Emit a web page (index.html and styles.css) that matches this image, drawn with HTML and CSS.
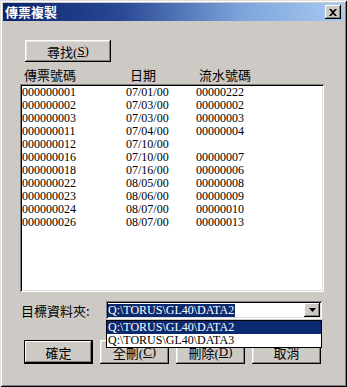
FILE: index.html
```html
<!DOCTYPE html>
<html lang="zh-Hant">
<head>
<meta charset="utf-8">
<title>傳票複製</title>
<link rel="stylesheet" href="styles.css">
</head>
<body>
<div class="window">
  <div class="titlebar">
    <span class="title">傳票複製</span>
    <span class="close">
      <svg width="8" height="7" viewBox="0 0 8 7"><path d="M0 0h2l2 2 2-2h2L5 3.5 8 7H6L4 5 2 7H0l3-3.5z" fill="#000"/></svg>
    </span>
  </div>
  <div class="content">
    <button class="btn search">尋找(<u>S</u>)</button>
    <div class="headers">
      <span class="c1">傳票號碼</span><span class="c2">日期</span><span class="c3">流水號碼</span>
    </div>
    <div class="list">
      <div class="row"><span class="c1">000000001</span><span class="c2">07/01/00</span><span class="c3">00000222</span></div>
      <div class="row"><span class="c1">000000002</span><span class="c2">07/03/00</span><span class="c3">00000002</span></div>
      <div class="row"><span class="c1">000000003</span><span class="c2">07/03/00</span><span class="c3">00000003</span></div>
      <div class="row"><span class="c1">000000011</span><span class="c2">07/04/00</span><span class="c3">00000004</span></div>
      <div class="row"><span class="c1">000000012</span><span class="c2">07/10/00</span><span class="c3"></span></div>
      <div class="row"><span class="c1">000000016</span><span class="c2">07/10/00</span><span class="c3">00000007</span></div>
      <div class="row"><span class="c1">000000018</span><span class="c2">07/16/00</span><span class="c3">00000006</span></div>
      <div class="row"><span class="c1">000000022</span><span class="c2">08/05/00</span><span class="c3">00000008</span></div>
      <div class="row"><span class="c1">000000023</span><span class="c2">08/06/00</span><span class="c3">00000009</span></div>
      <div class="row"><span class="c1">000000024</span><span class="c2">08/07/00</span><span class="c3">00000010</span></div>
      <div class="row"><span class="c1">000000026</span><span class="c2">08/07/00</span><span class="c3">00000013</span></div>
    </div>
    <div class="target">
      <span class="label">目標資料夾:</span>
      <div class="combo">
        <div class="combo-field"><span class="sel">Q:\TORUS\GL40\DATA2</span></div>
        <span class="drop-btn">
          <svg width="7" height="4" viewBox="0 0 7 4"><path d="M0 0h7L3.5 4z" fill="#000"/></svg>
        </span>
        <div class="dropdown">
          <div class="opt active">Q:\TORUS\GL40\DATA2</div>
          <div class="opt">Q:\TORUS\GL40\DATA3</div>
        </div>
      </div>
    </div>
    <div class="actions">
      <button class="btn default">確定</button>
      <button class="btn">全刪(<u>C</u>)</button>
      <button class="btn">刪除(<u>D</u>)</button>
      <button class="btn">取消</button>
    </div>
  </div>
</div>
</body>
</html>
```

FILE: styles.css
```css
html, body {
  margin: 0;
  padding: 0;
  background: #cdc9c5;
}
body {
  font-family: "Liberation Serif", "Noto Sans CJK TC", serif;
  font-size: 12px;
  color: #000;
}
.window {
  width: 347px;
  height: 387px;
  box-sizing: border-box;
  padding: 3px;
  background: #cdc9c5;
  box-shadow: inset 1px 1px #dfdfdf, inset -1px -1px #000, inset 2px 2px #fff, inset -2px -2px #808080;
}
.titlebar {
  height: 18px;
  display: flex;
  align-items: center;
  justify-content: space-between;
  padding: 0 3px 0 2px;
  background: linear-gradient(90deg, #0a246a 0%, #2a4a96 35%, #7ea4dc 70%, #a6caf0 100%);
}
.title {
  color: #fff;
  font-family: "Noto Sans CJK TC", sans-serif;
  font-weight: bold;
  font-size: 13px;
  line-height: 18px;
}
.close {
  width: 16px;
  height: 14px;
  box-sizing: border-box;
  display: flex;
  align-items: center;
  justify-content: center;
  background: #cdc9c5;
  box-shadow: inset -1px -1px #000, inset 1px 1px #fff, inset -2px -2px #808080;
}
.content {
  padding: 19px 20px 0 17px;
}
.btn {
  font-family: "Liberation Serif", "Noto Sans CJK TC", serif;
  font-size: 13px;
  color: #000;
  background: #cdc9c5;
  border: 0;
  padding: 0;
  margin: 0;
  height: 24px;
  box-sizing: border-box;
  box-shadow: inset -1px -1px #000, inset 1px 1px #fff, inset -2px -2px #808080, inset 2px 2px #e6e2de;
  display: flex;
  align-items: center;
  justify-content: center;
}
.btn u {
  text-decoration: underline;
  text-underline-offset: 1px;
}
.search {
  width: 86px;
  height: 22px;
  margin-left: 5px;
}
.headers {
  display: flex;
  margin-top: 5px;
  height: 15px;
  margin-bottom: 2px;
  font-family: "Noto Sans CJK TC", sans-serif;
  font-size: 13px;
  line-height: 15px;
  padding-left: 4px;
}
.headers .c1 { width: 106px; }
.headers .c2 { width: 69px; }
.list {
  height: 208px;
  box-sizing: border-box;
  background: #fff;
  padding: 2px 0 0 2px;
  box-shadow: inset 1px 1px #808080, inset -1px -1px #fff, inset 2px 2px #000, inset -2px -2px #dfdfdf;
}
.row {
  display: flex;
  height: 13px;
  line-height: 13px;
}
.row .c1 { width: 104px; }
.row .c2 { width: 70px; }
.target {
  display: flex;
  align-items: center;
  margin-top: 9px;
  padding-left: 1px;
}
.label {
  width: 85px;
  font-family: "Noto Sans CJK TC", sans-serif;
  font-size: 13px;
  line-height: 15px;
}
.combo {
  position: relative;
  width: 216px;
  height: 18px;
  box-sizing: border-box;
  background: #fff;
  display: flex;
  align-items: center;
  padding: 2px;
  box-shadow: inset 1px 1px #808080, inset -1px -1px #fff, inset 2px 2px #000, inset -2px -2px #dfdfdf;
}
.combo-field {
  flex: 1;
  height: 14px;
  display: flex;
  align-items: center;
}
.sel {
  background: #0b2a6f;
  color: #fff;
  line-height: 13px;
  height: 13px;
  padding-right: 1px;
}
.drop-btn {
  width: 16px;
  height: 14px;
  box-sizing: border-box;
  display: flex;
  align-items: center;
  justify-content: center;
  background: #cdc9c5;
  box-shadow: inset -1px -1px #000, inset 1px 1px #fff, inset -2px -2px #808080;
}
.dropdown {
  position: absolute;
  top: 19px;
  left: 0;
  width: 216px;
  box-sizing: border-box;
  border: 1px solid #000;
  background: #fff;
  z-index: 2;
}
.opt {
  height: 13px;
  line-height: 13px;
  padding-left: 1px;
}
.opt.active {
  background: #0b2a6f;
  color: #fff;
}
.actions {
  display: grid;
  grid-template-columns: repeat(4, 69px);
  column-gap: 7px;
  margin-top: 21px;
  padding-left: 4px;
}
.actions .btn {
  width: 69px;
}
.actions .default {
  box-shadow: inset 0 0 0 1px #000, inset -2px -2px #000, inset 2px 2px #fff, inset -3px -3px #808080;
}
```
